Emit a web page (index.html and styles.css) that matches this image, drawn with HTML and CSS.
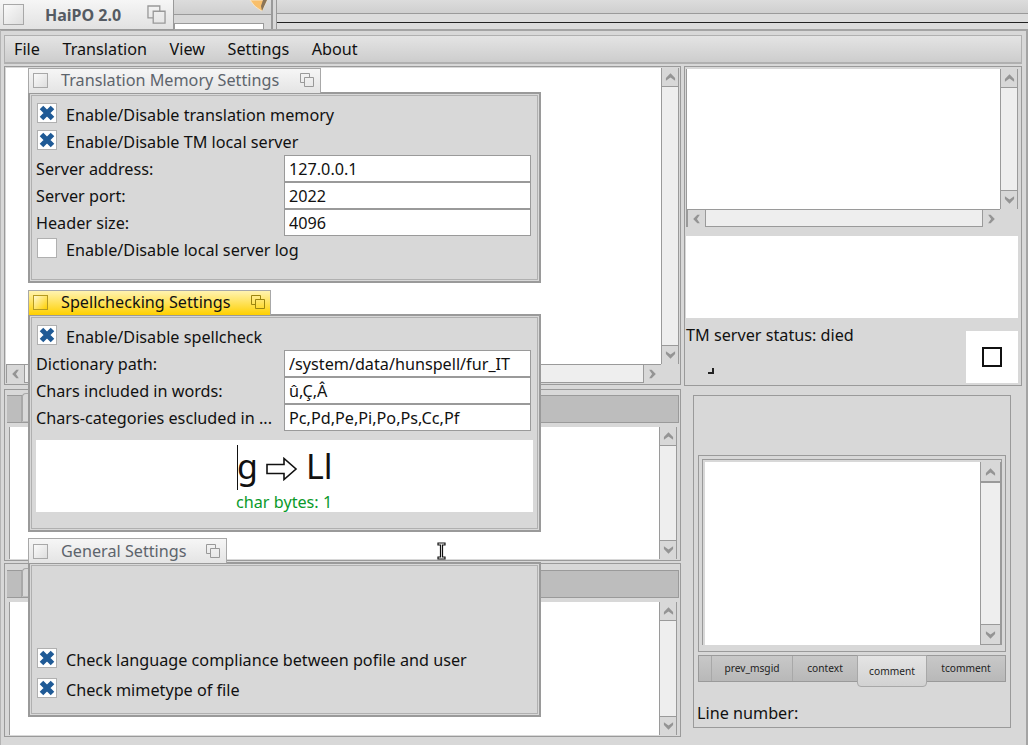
FILE: index.html
```html
<!DOCTYPE html>
<html lang="en">
<head>
    <meta charset="UTF-8">
    <title>HaiPO 2.0</title>
    <link rel="stylesheet" href="styles.css">
</head>
<body>
    <svg class="defs" width="0" height="0">
        <symbol id="up" viewBox="0 0 12 10"><path d="M6 1 L11 6 V9 L6 5.5 L1 9 V6 Z"/></symbol>
        <symbol id="down" viewBox="0 0 12 10"><path d="M6 9 L11 4 V1 L6 4.5 L1 1 V4 Z"/></symbol>
        <symbol id="left" viewBox="0 0 10 12"><path d="M1 6 L6 1 H9 L5.5 6 L9 11 H6 Z"/></symbol>
        <symbol id="right" viewBox="0 0 10 12"><path d="M9 6 L4 1 H1 L4.5 6 L1 11 H4 Z"/></symbol>
        <symbol id="cross" viewBox="0 0 18 18"><path d="M3.5 3.5 L14.5 14.5 M14.5 3.5 L3.5 14.5" stroke="#1f5a96" stroke-width="5" fill="none"/></symbol>
        <symbol id="stack" viewBox="0 0 16 16"><path d="M5.5 10.5 H1.5 V1.5 H10.5 V5.5 M5.5 5.5 H14.5 V14.5 H5.5 Z" fill="none" stroke="currentColor"/></symbol>
    </svg>

    <!-- windows behind the main one -->
    <div class="back">
        <div class="back-mid">
            <div class="back-mid-top">
                <svg class="pencil" width="20" height="12" viewBox="0 0 20 12"><path d="M1 0 H18 L13 11 L11 10 Q5 7 1 0 Z" fill="#f9bf6a" stroke="#f6e6c8"/><path d="M18 0 L13 11 L12 6 L14 0 Z" fill="#8a7458"/></svg>
            </div>
            <div class="back-mid-white"></div>
        </div>
        <div class="back-right"><div class="back-right-line"></div></div>
    </div>

    <div class="title-app">
        <span class="box"></span>
        <span class="title-text">HaiPO 2.0</span>
        <svg class="stack" width="21" height="21"><use href="#stack"/></svg>
    </div>

    <div class="main">
        <nav class="menubar">
            <span>File</span><span>Translation</span><span>View</span><span>Settings</span><span>About</span>
        </nav>
        <div class="panes">
            <div class="col-left">
                <section class="pane pane-top">
                    <div class="editor">
                        <div class="white"></div>
                        <div class="vscroll"><button class="sb"><svg><use href="#up"/></svg></button><div class="track"></div><button class="sb"><svg><use href="#down"/></svg></button></div>
                        <div class="hscroll"><button class="sb"><svg><use href="#left"/></svg></button><div class="track"></div><button class="sb"><svg><use href="#right"/></svg></button></div>
                    </div>
                </section>
                <section class="pane pane-mid">
                    <div class="tabbar"><span class="stub"></span><span class="tab-on"></span></div>
                    <div class="textrow">
                        <div class="white"></div>
                        <div class="vscroll"><button class="sb"><svg><use href="#up"/></svg></button><div class="track"></div><button class="sb"><svg><use href="#down"/></svg></button></div>
                    </div>
                </section>
                <section class="pane pane-bot">
                    <div class="tabbar"><span class="stub"></span><span class="tab-on"></span></div>
                    <div class="textrow">
                        <div class="white"></div>
                        <div class="vscroll"><button class="sb"><svg><use href="#up"/></svg></button><div class="track"></div><button class="sb"><svg><use href="#down"/></svg></button></div>
                    </div>
                </section>
            </div>
            <div class="col-right">
                <section class="tm-panel">
                    <div class="editor editor-small">
                        <div class="white"></div>
                        <div class="vscroll"><button class="sb"><svg><use href="#up"/></svg></button><div class="track"></div><button class="sb"><svg><use href="#down"/></svg></button></div>
                        <div class="hscroll"><button class="sb"><svg><use href="#left"/></svg></button><div class="track"></div><button class="sb"><svg><use href="#right"/></svg></button></div>
                    </div>
                    <div class="white tm-blank"></div>
                    <div class="tm-status">
                        <div class="tm-text">
                            <span>TM server status: died</span>
                            <span class="corner"></span>
                        </div>
                        <div class="tm-light"><span></span></div>
                    </div>
                </section>
                <section class="notes">
                    <div class="notes-frame">
                        <div class="textrow notes-text">
                            <div class="white"></div>
                            <div class="vscroll"><button class="sb"><svg><use href="#up"/></svg></button><div class="track"></div><button class="sb"><svg><use href="#down"/></svg></button></div>
                        </div>
                    </div>
                    <div class="notes-tabs">
                        <span class="nt nt-stub"></span>
                        <span class="nt nt-prev">prev_msgid</span>
                        <span class="nt nt-context">context</span>
                        <span class="nt nt-active">comment</span>
                        <span class="nt nt-tcomment">tcomment</span>
                    </div>
                    <p class="line-number">Line number:</p>
                </section>
            </div>
        </div>
    </div>

    <!-- floating settings windows -->
    <div class="win win-tm">
        <div class="win-title">
            <span class="box"></span>
            <span class="title-text">Translation Memory Settings</span>
            <svg class="stack" width="16" height="16"><use href="#stack"/></svg>
        </div>
        <div class="win-body">
            <label class="check"><span class="cb"><svg><use href="#cross"/></svg></span>Enable/Disable translation memory</label>
            <label class="check"><span class="cb"><svg><use href="#cross"/></svg></span>Enable/Disable TM local server</label>
            <div class="fields">
                <span>Server address:</span><input class="field" value="127.0.0.1">
                <span>Server port:</span><input class="field" value="2022">
                <span>Header size:</span><input class="field" value="4096">
            </div>
            <label class="check"><span class="cb"></span>Enable/Disable local server log</label>
        </div>
    </div>

    <div class="win win-spell">
        <div class="win-title active">
            <span class="box"></span>
            <span class="title-text">Spellchecking Settings</span>
            <svg class="stack" width="16" height="16"><use href="#stack"/></svg>
        </div>
        <div class="win-body">
            <label class="check"><span class="cb"><svg><use href="#cross"/></svg></span>Enable/Disable spellcheck</label>
            <div class="fields">
                <span>Dictionary path:</span><input class="field" value="/system/data/hunspell/fur_IT">
                <span>Chars included in words:</span><input class="field" value="û,Ç,Â">
                <span>Chars-categories escluded in ...</span><input class="field" value="Pc,Pd,Pe,Pi,Po,Ps,Cc,Pf">
            </div>
            <div class="preview">
                <div class="preview-main">
                    <span class="caret"></span>
                    <span>g</span>
                    <svg class="arrow" width="32" height="24" viewBox="0 0 32 24"><path d="M1 7.5 H18 V1.5 L30 12 L18 22.5 V16.5 H1 Z" fill="#fff" stroke="#111" stroke-width="1.6"/></svg>
                    <span class="ll">Ll</span>
                </div>
                <div class="preview-bytes">char bytes: 1</div>
            </div>
        </div>
    </div>

    <div class="win win-general">
        <div class="win-title">
            <span class="box"></span>
            <span class="title-text">General Settings</span>
            <svg class="stack" width="16" height="16"><use href="#stack"/></svg>
        </div>
        <div class="win-body">
            <label class="check"><span class="cb"><svg><use href="#cross"/></svg></span>Check language compliance between pofile and user</label>
            <label class="check"><span class="cb"><svg><use href="#cross"/></svg></span>Check mimetype of file</label>
        </div>
    </div>

    <!-- I-beam mouse pointer -->
    <svg class="ibeam" width="9" height="18" viewBox="0 0 9 18"><path d="M1 1 H8 V3 H5.5 V15 H8 V17 H1 V15 H3.5 V3 H1 Z" fill="#fff" stroke="#111" stroke-width="1.2"/></svg>
</body>
</html>
```

FILE: styles.css
```css
* {
    margin: 0;
    padding: 0;
    box-sizing: border-box;
}
:root {
    --bg: #d8d8d8;
    --line: #9a9a9a;
    --track: #eeeeee;
    --text: #111111;
}
body {
    width: 1028px;
    height: 745px;
    overflow: hidden;
    position: relative;
    background: var(--bg);
    color: var(--text);
    font-family: "Noto Sans", sans-serif;
    font-size: 16.2px;
}
.defs {
    position: absolute;
}

/* windows behind */
.back {
    position: absolute;
    left: 174px;
    top: 0;
    width: 854px;
    height: 30px;
    display: flex;
}
.back-mid {
    width: 99px;
    height: 30px;
    border-right: 2px solid var(--line);
}
.back-mid-top {
    height: 15px;
    background: linear-gradient(#dcdcdc, #cfcfcf);
    border-bottom: 1px solid var(--line);
    position: relative;
}
.pencil {
    position: absolute;
    left: 75px;
    top: 0;
}
.back-mid-white {
    width: 90px;
    height: 7px;
    margin-top: 8px;
    background: #fff;
    border-left: 1px solid var(--line);
    border-top: 1px solid var(--line);
    border-right: 1px solid var(--line);
}
.back-right {
    flex: 1;
    margin-left: 3px;
    height: 30px;
    border-left: 1px solid var(--line);
    background: linear-gradient(#dcdcdc 0, #cfcfcf 13px, var(--line) 13px, var(--line) 14px, #dcdcdc 14px);
}
.back-right-line {
    height: 1px;
    margin-top: 22px;
    background: #222;
}

.box {
    display: block;
    flex: none;
    border: 1px solid #a8a8a8;
    background: linear-gradient(135deg, #fafafa, #dedede);
}
.stack {
    flex: none;
    color: #999;
}

.title-app {
    position: absolute;
    left: 0;
    top: 0;
    z-index: 2;
    width: 174px;
    height: 30px;
    display: flex;
    align-items: center;
    background: linear-gradient(#f6f6f6, #e2e2e2);
    border-right: 1px solid var(--line);
    border-bottom: 1px solid var(--line);
}
.title-app .box {
    width: 21px;
    height: 21px;
    margin-left: 3px;
}
.title-app .title-text {
    margin-left: 21px;
    width: 101px;
    font-size: 16px;
    font-weight: 700;
    color: #555b63;
}
.title-app .stack {
    margin-top: -1px;
}

/* main window */
.main {
    position: absolute;
    left: 0;
    top: 29px;
    width: 1028px;
    height: 716px;
    padding: 4px 4px 0 2px;
    border-top: 2px solid #a4a4a4;
    border-right: 2px solid #a4a4a4;
    border-left: 1px solid #b4b4b4;
    display: flex;
    flex-direction: column;
}
.menubar {
    height: 29px;
    flex: none;
    margin-left: 1px;
    display: flex;
    gap: 22.6px;
    align-items: center;
    padding-left: 9px;
    background: linear-gradient(#e4e4e4, #cdcdcd);
    border: 1px solid #b0b0b0;
    border-bottom: 2px solid #b0b0b0;
}
.panes {
    flex: 1;
    display: flex;
    gap: 3px;
    padding-top: 2px;
}
.col-left {
    width: 677px;
    flex: none;
    display: flex;
    flex-direction: column;
    margin-left: 1px;
}
.col-right {
    flex: 1;
    display: flex;
    flex-direction: column;
    gap: 2px;
}
.pane {
    border: 1px solid var(--line);
    display: flex;
    flex-direction: column;
}
.pane-top {
    height: 319px;
    padding: 1px;
}
.pane-mid {
    height: 172px;
    margin-top: 4px;
    padding: 5px 3px 1px 1px;
}
.pane-bot {
    height: 174px;
    margin-top: 2px;
    padding: 6px 3px 1px 1px;
}
.white {
    background: #fff;
    min-width: 0;
    min-height: 0;
}

/* scrollbars */
.editor {
    flex: 1;
    display: grid;
    grid-template-columns: 1fr 18px;
    grid-template-rows: 1fr 19px;
}
.vscroll {
    display: flex;
    flex-direction: column;
    width: 18px;
    border-left: 1px solid var(--line);
    border-right: 1px solid var(--line);
}
.hscroll {
    display: flex;
    border-top: 1px solid var(--line);
    border-bottom: 1px solid var(--line);
    border-left: 1px solid var(--line);
}
.sb {
    flex: none;
    width: 17px;
    height: 18px;
    border: 0;
    background: var(--bg);
    display: flex;
    align-items: center;
    justify-content: center;
}
.vscroll .sb {
    width: 16px;
}
.sb svg {
    width: 11px;
    height: 10px;
    fill: #949494;
}
.track {
    flex: 1;
    background: var(--track);
    border: 0 solid var(--line);
}
.vscroll .track {
    border-width: 1px 0;
}
.hscroll .track {
    border-width: 0 1px;
}

.tabbar {
    height: 28px;
    flex: none;
    display: flex;
    background: #bdbdbd;
    border-top: 1px solid var(--line);
    border-bottom: 1px solid var(--line);
    border-right: 1px solid var(--line);
    margin: 0 -2px 0 1px;
}
.stub {
    display: block;
    width: 15px;
    height: 100%;
    border-right: 1px solid #a8a8a8;
}
.tab-on {
    display: block;
    width: 30px;
    height: 28px;
    margin-top: -3px;
    background: var(--bg);
    border-left: 1px solid #a8a8a8;
    border-top: 1px solid #a8a8a8;
    border-radius: 4px 0 0 0;
}
.textrow {
    flex: 1;
    display: flex;
    margin-top: 4px;
    margin-left: 3px;
    border-left: 1px solid var(--line);
    min-height: 0;
}
.textrow .white {
    flex: 1;
}

/* right column */
.tm-panel {
    height: 320px;
    border: 1px solid var(--line);
    padding: 2px 3px 2px 1px;
    display: flex;
    flex-direction: column;
}
.editor-small {
    flex: none;
    height: 158px;
    grid-template-rows: 1fr 18px;
    border-left: 1px solid var(--line);
}
.tm-blank {
    height: 82px;
    flex: none;
    margin-top: 9px;
}
.tm-status {
    flex: 1;
    display: flex;
    justify-content: space-between;
    padding-top: 13px;
}
.tm-text {
    display: flex;
    flex-direction: column;
    margin-top: -7px;
    line-height: 22px;
}
.corner {
    width: 6px;
    height: 6px;
    margin: 22px 0 0 22px;
    border-right: 2px solid #222;
    border-bottom: 2px solid #222;
}
.tm-light {
    width: 52px;
    height: 52px;
    background: #fff;
    display: flex;
    align-items: center;
    justify-content: center;
}
.tm-light span {
    width: 20px;
    height: 20px;
    border: 2px solid #111;
}
.notes {
    flex: 1;
    margin: 7px 11px 17px 9px;
    border: 1px solid var(--line);
    padding: 59px 4px 0 4px;
    display: flex;
    flex-direction: column;
}
.notes-frame {
    height: 197px;
    flex: none;
    border: 1px solid var(--line);
    padding: 3px 3px 6px;
}
.notes-frame .notes-text {
    height: 100%;
    margin: 0;
    border: 1px solid var(--line);
    border-width: 1px 1px 0 1px;
    padding: 2px 0 0 2px;
}
.notes-text .vscroll {
    width: 21px;
}
.notes-text .sb {
    width: 19px;
    height: 20px;
    border-bottom: 1px solid var(--line);
}
.notes-tabs {
    height: 27px;
    margin-top: 3px;
    flex: none;
    display: flex;
    background: linear-gradient(#c8c8c8, #b8b8b8);
    border: 1px solid var(--line);
    font-size: 10.2px;
    color: #222;
}
.nt {
    display: flex;
    align-items: center;
    justify-content: center;
    border-right: 1px solid #a8a8a8;
    padding-bottom: 2px;
}
.nt-stub { width: 13px; }
.nt-prev { width: 81px; }
.nt-context { width: 64px; border-right: 0; }
.nt-active {
    width: 70px;
    height: 32px;
    margin-top: -1px;
    padding-bottom: 0;
    background: linear-gradient(#e4e4e4, #d2d2d2);
    border: 1px solid #a8a8a8;
    border-radius: 0 0 4px 4px;
}
.nt-tcomment {
    flex: 1;
    border-right: 0;
}
.line-number {
    margin: 20px 0 0 -1px;
    line-height: 22px;
}

/* floating windows */
.win {
    position: absolute;
    left: 28px;
    width: 513px;
    z-index: 3;
    display: flex;
    flex-direction: column;
}
.win-tm { top: 68px; height: 215px; }
.win-spell { top: 290px; height: 242px; }
.win-general { top: 538px; height: 179px; }
.win-title {
    height: 25px;
    flex: none;
    display: flex;
    align-items: center;
    align-self: flex-start;
    padding-bottom: 2px;
    background: linear-gradient(#f6f6f6, #e4e4e4);
    border: 1px solid #a8a8a8;
    border-bottom: 0;
    color: #5d646c;
    position: relative;
    margin-bottom: -1px;
    z-index: 1;
}
.win-general .win-title {
    padding-bottom: 0;
}
.win-title.active {
    background: linear-gradient(#fff3b0, #ffd000);
    color: #111;
}
.win-title.active .box {
    border-color: #b59a20;
    background: linear-gradient(135deg, #fff8d0, #ffd000);
}
.win-title.active .stack {
    color: #9c8510;
}
.win-title .box {
    width: 15px;
    height: 15px;
    margin-left: 4px;
}
.win-title .title-text {
    margin-left: 13px;
    white-space: nowrap;
}
.win-title .stack {
    margin: 0 5px 0 19px;
}
.win-tm .win-title { width: 293px; }
.win-tm .win-title .title-text { width: 220px; }
.win-spell .win-title { width: 243px; }
.win-spell .win-title .title-text { width: 170px; }
.win-general .win-title { width: 199px; }
.win-general .win-title .title-text { width: 126px; }
.win-body {
    flex: 1;
    background: var(--bg);
    border: 2px solid var(--line);
    box-shadow: inset 0 0 0 1px var(--bg), inset 0 0 0 2px #b0b0b0;
    padding: 7px 7px 0 6px;
    display: flex;
    flex-direction: column;
}
.check {
    height: 27px;
    flex: none;
    display: flex;
    align-items: center;
    gap: 9px;
    padding-left: 1px;
}
.cb {
    width: 20px;
    height: 20px;
    flex: none;
    background: #fff;
    border: 1px solid #b0b0b0;
    display: block;
    margin-top: -3px;
}
.cb svg {
    display: block;
    width: 18px;
    height: 18px;
}
.fields {
    display: grid;
    grid-template-columns: 248px 1fr;
    grid-auto-rows: 27px;
    align-items: center;
}
.fields span {
    white-space: nowrap;
}
.field {
    height: 27px;
    width: 247px;
    border: 1px solid var(--line);
    background: #fff;
    padding: 0 4px;
    font: inherit;
    color: var(--text);
}
.preview {
    height: 72px;
    margin-top: 9px;
    margin-right: -1px;
    background: #fff;
    padding-left: 200px;
    position: relative;
}
.preview-main {
    height: 48px;
    font-size: 34px;
    line-height: 52px;
    white-space: nowrap;
    position: relative;
    padding-left: 1px;
    display: flex;
    align-items: flex-start;
}
.caret {
    position: absolute;
    left: 1px;
    top: 5px;
    width: 1px;
    height: 45px;
    background: #111;
}
.arrow {
    flex: none;
    margin: 17px 0 0 8px;
}
.ll {
    margin-left: 8px;
}
.preview-bytes {
    color: #0a9a2a;
    line-height: 22px;
    margin-top: 3px;
}
.win-general .win-body {
    padding-top: 80px;
}
.win-general .check {
    height: 30px;
    padding-top: 2px;
}
.win-general .cb {
    margin-top: -5px;
}

.ibeam {
    position: absolute;
    left: 437px;
    top: 542px;
    z-index: 5;
}
```
